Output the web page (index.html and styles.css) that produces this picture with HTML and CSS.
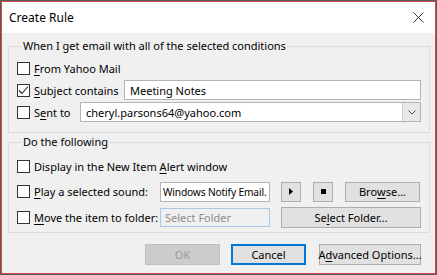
FILE: index.html
```html
<!DOCTYPE html>
<html lang="en">
<head>
  <meta charset="UTF-8" />
  <title>Create Rule</title>
  <link rel="stylesheet" href="styles.css">
</head>
<body>

  <div class="dialog">
    <!-- title bar -->
    <div class="titlebar">
      <span class="title">Create Rule</span>
      <svg class="close" width="11" height="11" viewBox="0 0 11 11">
        <path d="M0.5 0.5 L10.5 10.5 M10.5 0.5 L0.5 10.5" stroke="#333" stroke-width="1" fill="none"/>
      </svg>
    </div>

    <div class="content">
      <fieldset class="group group-conditions">
        <legend>When I get email with all of the selected conditions</legend>

        <div class="row">
          <label class="check"><span class="box"></span><span><u>F</u>rom Yahoo Mail</span></label>
        </div>
        <div class="row">
          <label class="check label-subject"><span class="box checked">
            <svg width="11" height="11" viewBox="0 0 11 11"><path d="M1 5.5 L4 8.5 L10 1.5" stroke="#222" stroke-width="1.1" fill="none"/></svg>
          </span><span><u>S</u>ubject contains</span></label>
          <div class="field grow">Meeting Notes</div>
        </div>
        <div class="row">
          <label class="check label-sent"><span class="box"></span><span>S<u>e</u>nt to</span></label>
          <div class="field combo grow">
            <span class="combo-text">cheryl.parsons64@yahoo.com</span>
            <span class="combo-btn">
              <svg width="8" height="5" viewBox="0 0 8 5"><path d="M0.5 0.5 L4 4 L7.5 0.5" stroke="#555" fill="none"/></svg>
            </span>
          </div>
        </div>
      </fieldset>

      <fieldset class="group group-actions">
        <legend>Do the following</legend>

        <div class="row">
          <label class="check"><span class="box"></span><span>Display in the New Item <u>A</u>lert window</span></label>
        </div>
        <div class="row">
          <label class="check label-wide"><span class="box"></span><span><u>P</u>lay a selected sound:</span></label>
          <div class="field short sound">Windows Notify Email.</div>
          <button class="btn icon-btn">
            <svg width="4" height="7" viewBox="0 0 4 7"><path d="M0 0 L4 3.5 L0 7 Z" fill="#000"/></svg>
          </button>
          <button class="btn icon-btn">
            <svg width="5" height="5" viewBox="0 0 5 5"><rect width="5" height="5" fill="#000"/></svg>
          </button>
          <button class="btn btn-browse">Bro<u>w</u>se...</button>
        </div>
        <div class="row">
          <label class="check label-wide"><span class="box"></span><span><u>M</u>ove the item to folder:</span></label>
          <div class="field short placeholder">Select Folder</div>
          <button class="btn btn-folder">Se<u>l</u>ect Folder...</button>
        </div>
      </fieldset>

      <div class="buttons">
        <button class="btn btn-main disabled">OK</button>
        <button class="btn btn-main focused">Cancel</button>
        <button class="btn btn-advanced">A<u>d</u>vanced Options...</button>
      </div>
    </div>
  </div>

</body>
</html>
```

FILE: styles.css
```css
* { margin: 0; padding: 0; box-sizing: border-box; }

body {
  background: #f0f0f0;
  font-family: "Noto Sans", "Open Sans", sans-serif;
  font-size: 11px;
  color: #000;
}

u { text-decoration: underline; text-underline-offset: 2px; }

/* window frame */
.dialog {
  width: 437px;
  height: 275px;
  background: #f0f0f0;
  border: 1px solid #5a5a5a;
  box-shadow: inset 0 0 0 1px #d04a4a;
  display: flex;
  flex-direction: column;
}

.titlebar {
  height: 31px;
  margin: 1px 1px 0 1px;
  background: #ffffff;
  display: flex;
  align-items: center;
  padding: 0 11px 0 7px;
}
.title { font-size: 12px; }
.close { margin-left: auto; }

.content {
  padding: 5px 6px 0 7px;
  display: flex;
  flex-direction: column;
}

/* group boxes */
.group {
  border: 1px solid #dcdcdc;
  padding: 3px 8px 8px 8px;
  display: flex;
  flex-direction: column;
}
.group legend {
  margin-left: 5px;
  padding: 0 1px;
  line-height: 16px;
}
.group-conditions { padding-bottom: 9px; }
.group-actions { margin-top: 1px; padding-top: 5px; padding-bottom: 4px; gap: 3.5px; }

.row {
  display: flex;
  align-items: center;
  height: 22px;
}

/* check boxes */
.check {
  display: flex;
  align-items: center;
  gap: 4px;
  white-space: nowrap;
  flex-shrink: 0;
}
.box {
  width: 13px;
  height: 13px;
  flex-shrink: 0;
  border: 1px solid #333;
  background: #fff;
  display: flex;
  align-items: center;
  justify-content: center;
}
.label-subject { width: 107px; }
.label-sent { width: 63px; }
.label-wide { width: 143px; }

/* text fields */
.field {
  height: 20px;
  border: 1px solid #b4b4b4;
  background: #fff;
  padding: 0 5px;
  display: flex;
  align-items: center;
  white-space: nowrap;
  overflow: hidden;
}
.grow { flex: 1; }
.short { width: 110px; flex-shrink: 0; padding: 0 4px; }
.sound { padding: 0 1px 0 2px; font-size: 10.2px; letter-spacing: -0.15px; }
.placeholder {
  height: 19px;
  border-color: #a9c9ea;
  color: #8c8c8c;
  background: #f0f0f0;
}

.combo { padding-right: 0; }
.combo-text { flex: 1; }
.combo-btn {
  width: 18px;
  height: 18px;
  background: #e8e8e8;
  border-left: 1px solid #d0d0d0;
  display: flex;
  align-items: center;
  justify-content: center;
}

/* buttons */
.btn {
  height: 20px;
  border: 1px solid #adadad;
  background: #e1e1e1;
  font-family: inherit;
  font-size: 11px;
  color: #000;
  white-space: nowrap;
  flex-shrink: 0;
  display: flex;
  align-items: center;
  justify-content: center;
}
.icon-btn { width: 20px; margin-left: 11px; }
.icon-btn + .icon-btn { margin-left: 12px; }
.btn-browse { width: 75px; margin-left: 12px; }
.btn-folder { flex: 1; margin-left: 11px; height: 21px; }

.buttons {
  display: flex;
  justify-content: flex-end;
  gap: 11px;
  padding: 11px 9px 0 0;
}
.btn-main { width: 75px; height: 21px; }
.btn-advanced { width: 102px; height: 21px; margin-left: 2px; }
.disabled {
  background: #cccccc;
  border-color: #bfbfbf;
  color: #9a9a9a;
}
.focused {
  border: 2px solid #0078d7;
}
```
